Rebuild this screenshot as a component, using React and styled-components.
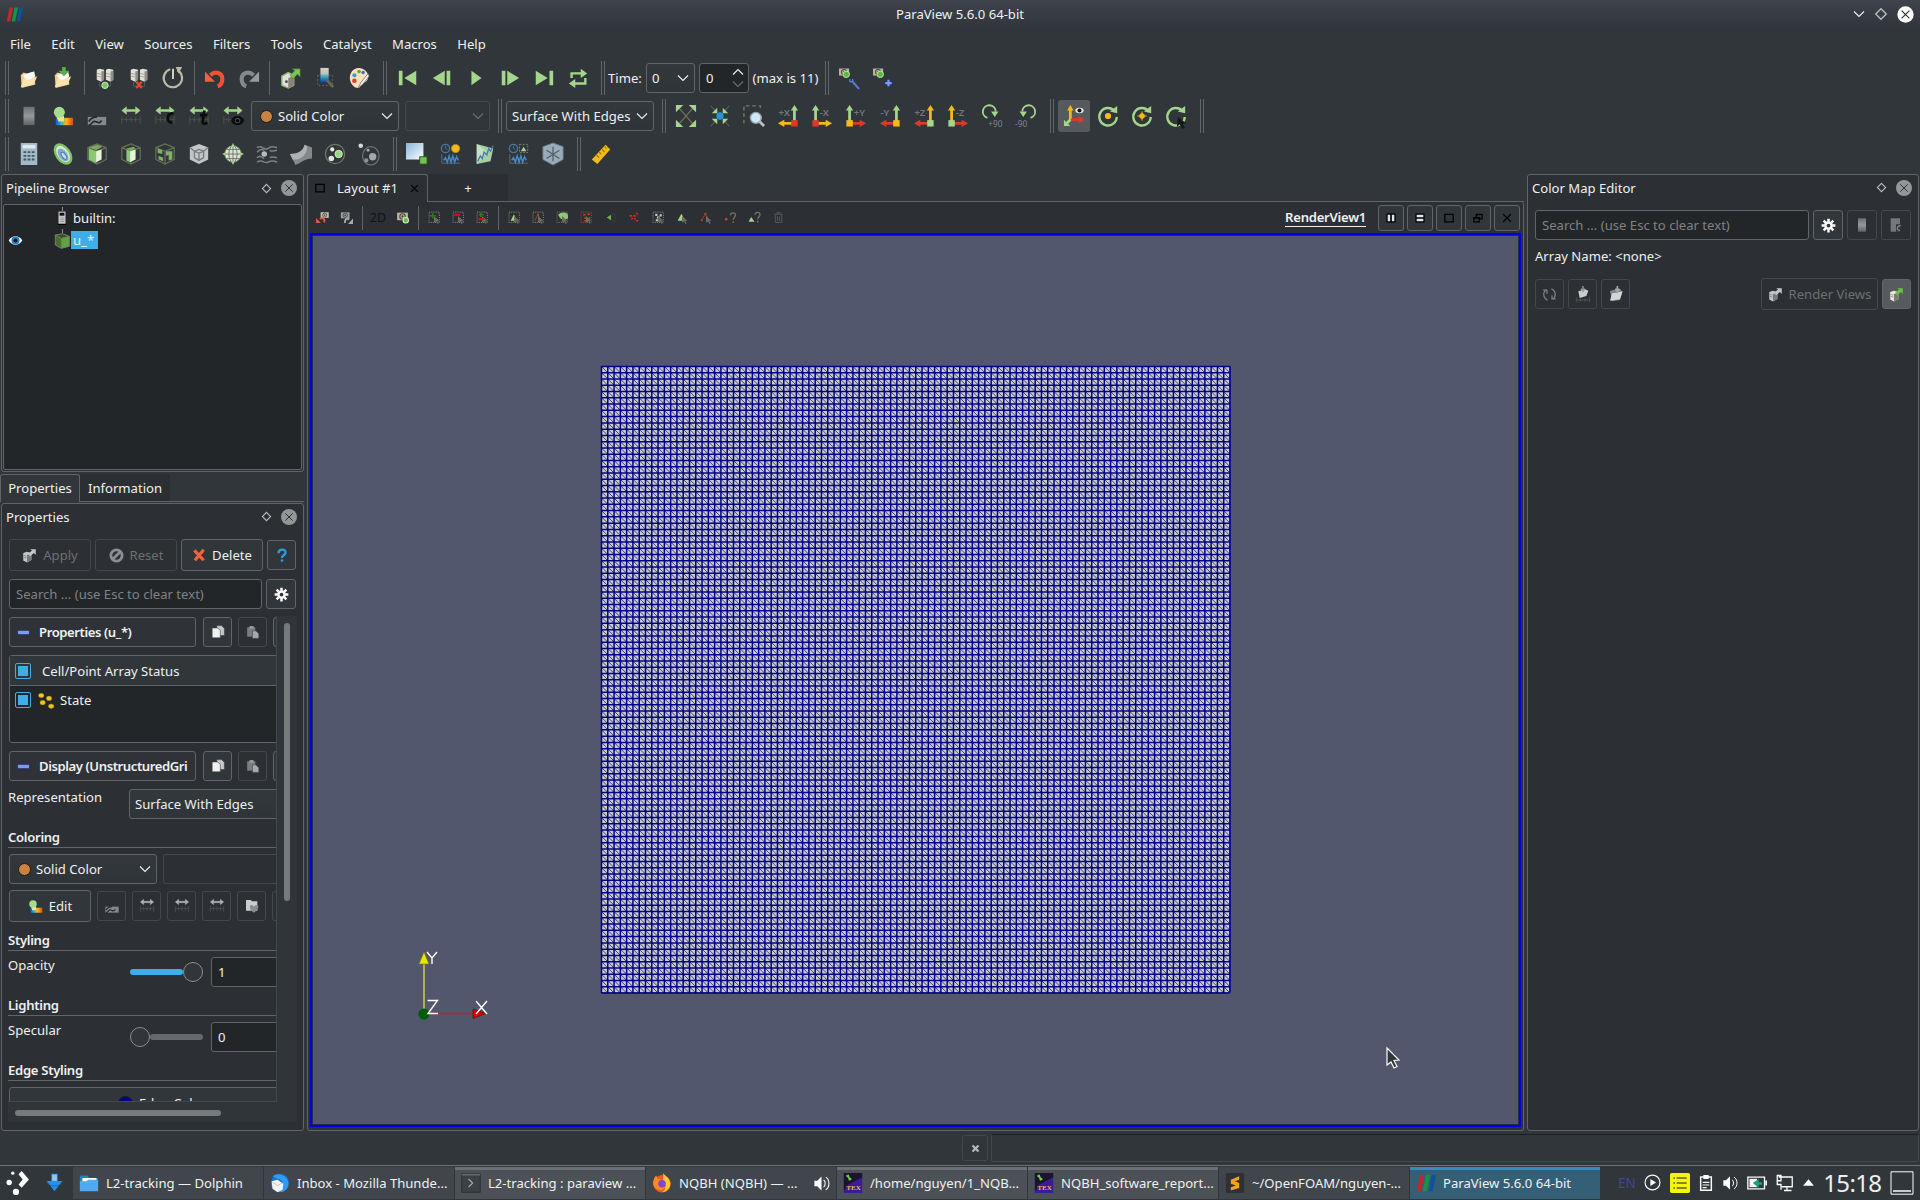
import React from "react";
import styled, { createGlobalStyle, css } from "styled-components";

const c = {
  win: "#31363b",
  panel: "#2c2f34",
  view: "#232629",
  line: "#616569",
  dim: "#44484c",
  text: "#eff0f1",
  muted: "#6d7073",
  blue: "#3daee9",
  green: "#a4d68c",
  red: "#da3b29",
  yellow: "#f5bb14",
};

const Global = createGlobalStyle`
  * { box-sizing: border-box; }
  html, body { margin: 0; padding: 0; background: ${c.win}; }
  body { font: 13.1px/18px "Noto Sans", "Liberation Sans", sans-serif; color: ${c.text}; overflow: hidden; }
  svg { display: block; flex: none; overflow: visible; }
`;

/* ---------- icon drawings, 24 x 24 ---------- */
const G = c.green;
const ServerPair = () => (
  <>
    <path d="M3 3l3-1 5 1v11l-3 2-5-2zM13 3l3-1 5 1v11l-3 2-5-2z" fill="#e3e0da" />
    <path d="M8 5v11l3-2V4zM18 5v11l3-2V4z" fill="#908e87" />
    <path d="M3 7l5 1M13 7l5 1M3 10l5 1M13 10l5 1" stroke="#a5a29b" />
    <path d="M6 16v5h12v-5" fill="none" stroke="#5a5d4d" />
  </>
);
const Folder = ({ a = "#fbe3ae", b = "#f0cf8d" }) => (
  <>
    <path d="M3 9l3-3 4 1 8-2v7l1 7-15 4z" fill={b} />
    <path d="M5 9l12-4 2 5-9 6z" fill="#fafafa" />
    <path d="M3 22l3-9 6 1 9-4-4 9z" fill={a} />
  </>
);
const Range = ({ k = G, g = "#4b5546" }) => (
  <>
    <path d="M2 6l5-4v3h10V2l5 4-5 4V7H7v3z" fill={k} stroke={k} strokeWidth=".6" />
    <path d="M2 12v9M7 13v6M12 13v6M17 13v6M22 12v9M2 16h20" stroke={g} fill="none" />
  </>
);
const Cube = ({ line = "#687158", face = "#8bc873", children }) => (
  <>
    <path d="M2 5l10-4 10 4v13l-10 5-10-5zM2 5l10 4 10-4M12 9v14" fill="none" stroke={line} strokeWidth="1.3" />
    {children || (
      <>
        <path d="M3 6l8 3v13l-8-4z" fill={face} />
        <path d="M3 5l9-3 6 2-7 4z" fill="#77a860" />
        <path d="M11 9l6-2v11l-6 3z" fill="#e7f3dd" />
      </>
    )}
  </>
);
const Axis = ({ up, side, dir, label, sq }) => {
  const x = dir > 0 ? 5 : 19;
  const s = dir;
  return (
    <>
      <path d={`M${x} 18V5`} stroke={up} strokeWidth="3" />
      <path d={`M${x - 4} 6l4-6 4 6z`} fill={up} />
      <path d={`M${x} 20h${s * 12}`} stroke={side} strokeWidth="3" />
      <path d={`M${x + s * 11} 16l${s * 7} 4 ${-s * 7} 4z`} fill={side} />
      <rect x={x - 3.5} y="16.5" width="7" height="7" fill={sq} />
      <text x={dir > 0 ? 9.5 : 1.5} y="11.5" fontSize="10.5" fontWeight="600" fill="#74777a">{label}</text>
    </>
  );
};
const Circ = ({ children }) => (
  <>
    <path d="M19.5 7A9.5 9.5 0 1 0 21.500 13" fill="none" stroke={G} strokeWidth="2.6" />
    <path d="M14 7l8-6v8z" fill={G} />
    {children}
  </>
);
const PVLogo = () => (
  <>
    <path d="M5 2h5L6 22H1z" fill="#c1272d" />
    <path d="M12 2h5l-4 20H8z" fill="#159447" />
    <path d="M19 2h5l-4 20h-5z" fill="#0d539c" />
  </>
);
const Server = ({ arrow = "#c4c7c9", body = "#c4c7c9" }) => (
  <>
    <path d="M2 8l6-2 7 2v11l-7 4-6-3z" fill={body} />
    <path d="M8 11v12l7-4V9z" fill="#77797a" />
    <path d="M3 12l4 1M3 15l4 1" stroke="#666" />
    <path d="M10 9l6-5-3-2h9v9l-3-3-6 5z" fill={arrow} />
  </>
);
const Camera = ({ f = "#b9b49f" }) => (
  <>
    <path d="M2 3h20v14H2z" fill={f} />
    <circle cx="12" cy="10" r="5" fill="none" stroke="#47483f" strokeWidth="2" />
    <circle cx="12" cy="10" r="2" fill="#47483f" />
  </>
);
const Dots = ({ k = "#777a7c" }) => (
  <rect x="2" y="2" width="19" height="19" fill="none" stroke={k} strokeWidth="2" strokeDasharray="2 2" />
);
const Ptr = () => <path d="M11 9l10 9-4 .5 3 4-3 1-2-4-4 2z" fill="#6d6c5d" />;
const Cog = () => (
  <g stroke="#fcfcfc" fill="none">
    <circle cx="12" cy="12" r="5" strokeWidth="4" />
    <path d="M12 1v5M12 18v5M1 12h5M18 12h5M4.200 4.200l3.500 3.500M16.300 16.300l3.500 3.500M4.200 19.800l3.500-3.500M16.300 7.700l3.500-3.500" strokeWidth="4" />
  </g>
);

const icons = {
  logo: <PVLogo />,
  open: <Folder />,
  save: (<><Folder /><path d="M11 0h4v4h4l-6 6-6-6h4z" fill="#56b043" /></>),
  connect: (<><ServerPair /><circle cx="12" cy="20" r="3.500" fill="#79c95a" stroke="#d5edc9" /></>),
  disconnect: (<><ServerPair /><path d="M9 16l6 7M15 16l-6 7" stroke="#e2492f" strokeWidth="2.600" /></>),
  clock: (<><path d="M17 3.500A10 10 0 1 1 9 2.500" fill="none" stroke="#bcbaa6" strokeWidth="2.400" /><path d="M12 2v11" stroke="#dedccb" strokeWidth="2" /><path d="M15 0h7l-4 7z" fill="#bcbaa6" /></>),
  undo: (<><path d="M7 9c5-5 13-3 13 4 0 4-2 7-5 8" fill="none" stroke="#f0532f" strokeWidth="4.500" /><path d="M1 5v11h11z" fill="#f2603a" /></>),
  redo: (<><path d="M17 9C12 4 4 6 4 13c0 4 2 7 5 8" fill="none" stroke="#85898c" strokeWidth="4.500" /><path d="M23 5v11H12z" fill="#989c9f" /></>),
  apply: (<><path d="M2 10l7-4 6 3v11l-6 3-7-3z" fill="#e2e0da" stroke="#8abb6b" strokeWidth="1.500" /><path d="M9 12v11l6-3V10z" fill="#85837c" /><circle cx="7" cy="16" r="1.500" fill="#444" /><path d="M11 9l5-5-3-2h9v9l-3-3-5 5z" fill="#7cc356" stroke="#3e6a2a" strokeWidth=".6" /></>),
  colorsel: (<><defs><linearGradient id="cs" x1="0" y1="0" x2="0" y2="1"><stop offset="0" stopColor="#d9cfc4" /><stop offset=".4" stopColor="#c5bfb7" /><stop offset=".5" stopColor="#57bcc2" /><stop offset="1" stopColor="#0b3ba8" /></linearGradient></defs><rect x="4" y="9" width="16" height="11" fill="none" stroke="#686a55" strokeDasharray="2 2" /><rect x="7" y="1" width="9" height="16" fill="url(#cs)" /><path d="M14 14l7 8" stroke="#686a55" strokeWidth="3" /></>),
  palette: (<><path d="M12 1C5 1 2 7 2 12s4 11 9 11c4 0 1-5 5-6 4 0 6-3 6-7 0-5-5-9-10-9z" fill="#fbe0bb" /><circle cx="7" cy="9" r="2.300" fill="#30a2cf" /><circle cx="12" cy="5" r="2" fill="#59ad40" /><circle cx="7" cy="15" r="2.500" fill="#e23d2f" /><circle cx="16.500" cy="6" r="2" fill="#3b78c4" /><path d="M22 7l-8 10-3 6 5-4 7-9z" fill="#f2f2ef" stroke="#555" strokeWidth=".7" /></>),
  first: <path d="M2 4h4v16H2zM21 4v16L8 12z" fill={G} />,
  prev: <path d="M15 4v16L2 12zM17 4h4v16h-4z" fill={G} />,
  play: <path d="M7 4l11 8-11 8z" fill={G} />,
  next: <path d="M3 4h4v16H3zM9 4l13 8-13 8z" fill={G} />,
  last: <path d="M3 4l13 8-13 8zM18 4h4v16h-4z" fill={G} />,
  loop: (<><path d="M5 12V7h13M20 12v6H7" fill="none" stroke={G} strokeWidth="2.600" /><path d="M15 2l7 5-7 5zM9 13l-7 5 7 5z" fill={G} /></>),
  wrench: (<><g transform="scale(.55)"><Camera /></g><circle cx="9" cy="8" r="3.500" fill="#5abd3b" stroke="#c9e8bb" /><path d="M15 15l8 9" stroke="#5878d8" strokeWidth="2.200" /><path d="M13 13v3h3v-3" fill="none" stroke="#5878d8" strokeWidth="1.500" /></>),
  addcam: (<><g transform="scale(.55)"><Camera /></g><circle cx="9" cy="8" r="3.500" fill="#5abd3b" stroke="#c9e8bb" /><path d="M18 13v9M13.500 17.500h9" stroke="#20307a" strokeWidth="4" /><path d="M18 14v7M14.500 17.500h7" stroke="#7f9bf0" strokeWidth="2.400" /></>),
  graybar: (<><defs><linearGradient id="gb" x1="0" y1="0" x2="0" y2="1"><stop offset="0" stopColor="#6d7073" /><stop offset=".5" stopColor="#96999c" /><stop offset="1" stopColor="#5f6265" /></linearGradient></defs><rect x="6" y="2" width="12" height="20" fill="url(#gb)" /></>),
  editmap: (<><defs><linearGradient id="rb"><stop offset="0" stopColor="#1a4fd0" /><stop offset=".3" stopColor="#2bb5d0" /><stop offset=".6" stopColor="#f5b81b" /><stop offset="1" stopColor="#e04a17" /></linearGradient></defs><path d="M6 12h7v5H6z" fill="#efe38a" /><rect x="4" y="14" width="19" height="8" fill="url(#rb)" /><path d="M5 13h8v5H7z" fill="#efe38a" /><circle cx="8" cy="8" r="6" fill="#a6dd8c" /></>),
  sepmap: (<><rect x="2" y="13" width="20" height="9" fill="#85888a" /><path d="M3 22c4 0 3-5 7-4s4 3 7-1M3 18c2-3 4-5 9-5" stroke="#24272a" strokeWidth="1.800" fill="none" /></>),
  range: <Range />,
  rangeGray: <Range k="#b0b3b5" g="#55585b" />,
  rangec: (<><Range /><path d="M21 10c-6-4-9 10-1 9" fill="none" stroke="#0b0c0d" strokeWidth="3.200" /></>),
  ranget: (<><Range /><path d="M18 6l-2 12c0 3 3 3 5 1M13 11h8" fill="none" stroke="#0b0c0d" strokeWidth="3" /></>),
  rangeeye: (<><Range /><ellipse cx="17" cy="17" rx="7" ry="5" fill="#0b0c0d" /><circle cx="17" cy="17" r="3" fill="#454a4e" /><circle cx="17" cy="17" r="1.800" fill="#000" /></>),
  calc: (<><rect x="3" y="0" width="18" height="24" fill="#a3b9c5" /><rect x="5" y="2" width="14" height="4" fill="#dfeaf0" /><path d="M6 10h3M10.500 10h3M15 10h3M6 14h3M10.500 14h3M15 14h3M6 18h3M10.500 18h3M15 18h3" stroke="#3f5a6b" strokeWidth="2" /></>),
  contour: (<><ellipse cx="12" cy="12" rx="8.500" ry="13" transform="rotate(-35 12 12)" fill="#7fc068" /><ellipse cx="12" cy="12" rx="6" ry="10" transform="rotate(-35 12 12)" fill="#d8ead5" /><ellipse cx="12" cy="13" rx="4.500" ry="8" transform="rotate(-35 12 13)" fill="#7fa7d3" /><ellipse cx="13" cy="14" rx="2" ry="4.500" transform="rotate(-35 13 14)" fill="#c9dcee" stroke="#4a78a0" /></>),
  clip: <Cube />,
  slice: (<Cube><path d="M7 6l8-2 2 2-6 3z" fill="#77a860" /><path d="M7 7l4 2v12l-4-2z" fill="#8bc873" /><path d="M11 9l6-2v11l-6 3z" fill="#e7f3dd" /></Cube>),
  threshold: (<Cube><path d="M4 6l5 2v4l-5-1zM13 9h7v9l-4 1v-6l-3 1zM5 14l5 2v4l-5-2z" fill="#7eb166" /></Cube>),
  subset: (<><path d="M2 5l10-4 10 4v13l-10 5-10-5z" fill="#c3c6c8" /><path d="M7 9l5-2 5 2v7l-5 3-5-3zM7 9l5 2 5-2M12 11v8M2 5l5 4M22 5l-5 4" fill="none" stroke="#77797b" strokeWidth="1.400" /></>),
  glyph: (<><circle cx="12" cy="12" r="9" fill="#dfe3dc" stroke="#768b67" /><path d="M3 12h18M12 3v18M5 7h14M5 17h14" stroke="#65745c" fill="none" /><ellipse cx="12" cy="12" rx="4.500" ry="9" fill="none" stroke="#65745c" /><path d="M12 0l2 4h-4zM12 24l2-4h-4zM0 12l4-2v4zM24 12l-4-2v4z" fill={G} /></>),
  stream: (<><path d="M1 5c6-4 7 4 12 1 4-3 6-2 10-1M1 10c4-4 6-3 8-2M15 8c3 2 5 0 8 0M1 16c4-3 6 0 8 1M15 16c3-2 5 0 8 0M1 21c6-4 8 2 12 0 4-2 6-2 10 0" stroke="#7d8184" fill="none" strokeWidth="1.600" /><circle cx="9" cy="12" r="3" fill="#b7bbbd" /></>),
  warp: (<><path d="M0 12c9 0 14-3 16-10l8 3v12c-8 0-12 5-18 7z" fill="#85888b" /><path d="M0 12c9 0 14-3 16-10l3 2c-1 10-8 15-16 14z" fill="#aeb1b3" /></>),
  group: (<><circle cx="12" cy="12" r="10.500" fill="none" stroke="#707863" strokeWidth="1.300" /><circle cx="9" cy="7" r="2.300" fill="#e9ede6" /><circle cx="16" cy="12" r="4" fill="#9bd681" stroke="#d5edc9" /><circle cx="8" cy="17" r="3" fill="#dfe5e0" /></>),
  extract: (<><ellipse cx="14" cy="14" rx="9" ry="10" fill="none" stroke="#707477" strokeWidth="1.300" /><circle cx="3" cy="3" r="2.500" fill="#d5d8da" /><circle cx="16" cy="15" r="4" fill="#a4a8aa" /><circle cx="9" cy="19" r="2.300" fill="#8d9193" /><circle cx="11" cy="8" r="1.600" fill="#aaa" /></>),
  pick: (<><defs><linearGradient id="pk" x1="0" y1="0" x2="1" y2="1"><stop offset="0" stopColor="#85b6dd" /><stop offset="1" stopColor="#fff" /></linearGradient></defs><rect x="0" y="0" width="19" height="18" fill="url(#pk)" /><rect x="15" y="15" width="8" height="8" fill="#77c055" stroke="#2e4f21" /></>),
  tplot: (<><circle cx="6" cy="6" r="4.500" fill="none" stroke="#4a7498" strokeWidth="1.500" /><path d="M6 3v3l2 1" stroke="#4a7498" fill="none" /><circle cx="17" cy="6" r="4.500" fill={c.yellow} stroke="#a98829" /><path d="M2 12v10h20" stroke="#606c76" fill="none" /><path d="M4 19l2-3 2 5 2-7 2 7 2-7 2 7 2-6 2 4" stroke="#4689c2" fill="none" strokeWidth="1.600" /></>),
  lplot: (<><path d="M3 1l18 5-3 14-15 3z" fill="#a8cfa2" /><path d="M3 1l11 9-11 13z" fill="#c6dfc4" /><path d="M4 20l3-6 2 3 2-7 3 3 2-7 2 3 3-6" stroke="#407fae" fill="none" strokeWidth="1.500" /></>),
  splot: (<><circle cx="6" cy="6" r="4.500" fill="none" stroke="#4a7498" strokeWidth="1.500" /><path d="M6 3v3l2 1" stroke="#4a7498" fill="none" /><rect x="12.500" y="1.500" width="9" height="9" fill="none" stroke="#878a72" strokeDasharray="2 1.500" /><path d="M14 9l3-5 3 5z" fill={G} /><path d="M2 12v10h20" stroke="#606c76" fill="none" /><path d="M4 19l2-3 2 5 2-7 2 7 2-7 2 7 2-6 2 4" stroke="#4689c2" fill="none" strokeWidth="1.600" /></>),
  hex: (<><path d="M1 4l11-4 11 4v14l-11 6-11-6z" fill="#9aabb9" stroke="#6e7d89" /><path d="M12 4v16M5 8l14 9M19 8L5 17" stroke="#56616b" strokeWidth="1.400" /></>),
  ruler: (<><path d="M2 18L17 2l5 5L8 23z" fill={c.yellow} /><path d="M7 13l3 3M10 10l2 2M13 7l3 3M16 4l2 2" stroke="#94701a" strokeWidth="1.300" /></>),
  reset: (<><path d="M5 4l14 16M19 4L5 20" stroke="#6f7058" strokeWidth="1.500" /><path d="M1 0h8l-8 8zM23 0v8l-8-8zM1 24v-8l8 8zM23 24h-8l8-8z" fill={G} /></>),
  zoomdata: (<><path d="M2 1l7 8M22 1l-7 8M2 23l7-8M22 23l-7-8" stroke="#6f7058" /><path d="M9 3v6H3zM15 3v6h6zM9 21v-6H3zM15 21v-6h6z" fill={G} /><circle cx="12" cy="12" r="4" fill="#2a93d5" /></>),
  zoombox: (<><path d="M1 20V1h18v5" fill="none" stroke="#74776a" strokeDasharray="4 3" strokeWidth="1.500" /><circle cx="14" cy="14" r="6" fill="#cfe8f3" stroke="#8b9fa9" strokeWidth="1.500" /><path d="M18 18l5 5" stroke="#bcc0c2" strokeWidth="3" /></>),
  px: <Axis up={G} side={c.yellow} sq={c.red} dir={-1} label="+X" />,
  mx: <Axis up={G} side={c.yellow} sq={c.red} dir={1} label="-X" />,
  py: <Axis up={G} side={c.red} sq={c.yellow} dir={1} label="+Y" />,
  my: <Axis up={G} side={c.red} sq={c.yellow} dir={-1} label="-Y" />,
  pz: <Axis up={c.yellow} side={c.red} sq={G} dir={-1} label="+Z" />,
  mz: <Axis up={c.yellow} side={c.red} sq={G} dir={1} label="-Z" />,
  rotp: (<><path d="M7 14A7 7 0 1 1 16 7" fill="none" stroke={G} strokeWidth="2" /><path d="M11 7h8l-4 6z" fill={G} /><text x="8" y="24.500" fontSize="9" fill="#808386">+90</text></>),
  rotm: (<><path d="M17 14A7 7 0 1 0 8 7" fill="none" stroke={G} strokeWidth="2" /><path d="M5 7h8l-4 6z" fill={G} /><text x="0" y="24.500" fontSize="9" fill="#808386">-90</text></>),
  orient: (<><path d="M8 16V5" stroke={c.yellow} strokeWidth="3" /><path d="M4.500 6L8 0l3.500 6z" fill={c.yellow} /><path d="M9 16h9" stroke={c.red} strokeWidth="3" /><path d="M17 12l7 4-7 4z" fill={c.red} /><path d="M8 16l-5 5" stroke={G} strokeWidth="3" /><path d="M1 16v7h7z" fill={G} /><ellipse cx="18" cy="6" rx="4.500" ry="3" fill="#e9e9e9" /><circle cx="18" cy="6" r="2.200" fill="#111" /></>),
  cshow: <Circ><circle cx="12" cy="12" r="3.400" fill={c.yellow} /></Circ>,
  creset: <Circ><path d="M12 7v10M7 12h10" stroke={c.yellow} strokeWidth="1.200" /><circle cx="12" cy="12" r="3" fill={c.yellow} /></Circ>,
  cpick: <Circ><path d="M14 13l9 7-4 1 3 4-3 1-3-5-3 3z" fill="#15171a" /></Circ>,
  camundo: (<><g transform="translate(7 0) scale(.75)"><Camera f="#c8bfae" /></g><path d="M7 15c5-4 10-1 8 6" fill="none" stroke="#e2593c" strokeWidth="3.500" /><path d="M0 13v9h9z" fill="#e2593c" /></>),
  camredo: (<><g transform="scale(.8)"><Camera f="#9b9ea1" /></g><path d="M17 16c-4-4-8-1-8 6" fill="none" stroke="#a8abae" strokeWidth="3.500" /><path d="M24 14v10h-9z" fill="#a8abae" /></>),
  campic: (<><Camera /><circle cx="18" cy="17" r="5" fill="#67bf48" stroke="#d5edc9" strokeWidth="2" /></>),
  seladd: (<><Dots /><Ptr /><path d="M9 4v10M4 9h10" stroke="#2c7a1a" strokeWidth="3" /></>),
  selsub: (<><Dots /><Ptr /><path d="M4 7h11" stroke="#e01010" strokeWidth="3.500" /></>),
  seltog: (<><Dots /><Ptr /><path d="M9 3v8M5 7h9" stroke="#2c7a1a" strokeWidth="3" /><path d="M4 15h11" stroke="#e01010" strokeWidth="3.500" /></>),
  scell: (<><Dots k="#77795f" /><path d="M5 18l6-12 5 12z" fill={G} /><Ptr /></>),
  spoint: (<><Dots k="#77795f" /><path d="M5 18l6-12 5 12" fill="none" stroke="#6b4a3c" strokeWidth="2" /><circle cx="11" cy="7" r="2" fill="#d33a1d" /><Ptr /></>),
  sfrc: (<><Dots k="#666a5d" /><path d="M4 7c5-6 18-5 18 1v6l-8 2-6-2z" fill="#8fc976" /><Ptr /></>),
  sfrp: (<><Dots k="#91402f" /><path d="M6 7h4M14 6h4M8 13h4M16 13h3M8 18h3" stroke="#dd3f24" strokeWidth="2.500" /><Ptr /></>),
  spolyc: (<><path d="M14 6l6-2v16l-6-4" fill="none" stroke="#30422c" strokeWidth="2" /><path d="M5 12l8-5v10z" fill="#6fae57" /></>),
  spolyp: <path d="M3 9h4M6 14h3M10 9h4M15 5h3M11 14h3M15 18h4" stroke="#dd3015" strokeWidth="3.200" />,
  sblock: (<><Dots /><path d="M6 7h4M14 8h4M9 12h5M7 17h4" stroke="#c6c9c6" strokeWidth="4" /><Ptr /></>),
  icell: (<><path d="M3 18l7-13 7 13z" fill={G} /><Ptr /></>),
  ipoint: (<><path d="M3 17l7-12 6 12" fill="none" stroke="#6b4a3c" strokeWidth="2" /><circle cx="10" cy="5" r="2" fill="#d33a1d" /><circle cx="3" cy="17" r="2" fill="#d33a1d" /><Ptr /></>),
  hpoint: (<><circle cx="4" cy="15" r="2.500" fill="#c04a2c" /><path d="M12 8c0-6 10-6 9 0 0 4-4 4-4 8M17 19v3" fill="none" stroke="#74735f" strokeWidth="2.500" /></>),
  hcell: (<><path d="M1 20l5-9 6 9z" fill={G} /><path d="M13 7c0-6 10-6 9 0 0 4-4 4-4 8M18 18v3" fill="none" stroke="#74735f" strokeWidth="2.500" /></>),
  trash: <path d="M4 6h16M9 6V3h6v3M6 7v14h12V7M10 10v8M14 10v8" fill="none" stroke="#55595c" strokeWidth="1.800" />,
  splith: (<><path d="M1 1h22v22H1z" fill="#000" /><path d="M4 4h6v16H4zM14 4h6v16h-6z" fill="#dfe5f5" /></>),
  splitv: (<><path d="M1 1h22v22H1z" fill="#000" /><path d="M4 4h16v6H4zM4 14h16v6H4z" fill="#dfe5f5" /></>),
  max: <path d="M2 3h20v18H2z" fill="none" stroke="#000" strokeWidth="3" />,
  restore: <path d="M2 11h13v10H2zM8 10V3h14v11h-6M2 12h13M8 4h14" fill="none" stroke="#000" strokeWidth="3" />,
  cross: <path d="M3 3l18 18M21 3L3 21" stroke="#000" strokeWidth="3" />,
  applyg: <Server />,
  applyc: <Server arrow="#6bc43d" body="#ebe8de" />,
  resetg: (<><circle cx="12" cy="12" r="9" fill="none" stroke="#8c8f91" strokeWidth="4.500" /><path d="M6 18L18 6" stroke="#8c8f91" strokeWidth="4.500" /></>),
  delete: <path d="M4 4l16 17M20 3L5 21" stroke="#f4623c" strokeWidth="5.500" />,
  help: (<><path d="M6 9c0-8 13-8 12-1 0 4-6 4-6 9" fill="none" stroke="#299be0" strokeWidth="4" /><circle cx="12" cy="21.500" r="2.300" fill="#299be0" /></>),
  cog: <Cog />,
  minus: <path d="M1 8h22v8H1z" fill="#7d9cec" stroke="#222b63" strokeWidth="1.500" />,
  copy: (<><path d="M10 1h8l5 5v12H10z" fill="#c6c7c8" stroke="#3b3d3f" /><path d="M2 5h9l5 4v13H2z" fill="#f0f0f0" stroke="#3b3d3f" /></>),
  paste: (<><path d="M2 4h14v16H2z" fill="#7b7e81" /><path d="M6 2h7v4H6z" fill="#a0a3a5" /><path d="M11 10h6l5 5v8H11z" fill="#a7aaac" stroke="#3b3d3f" /></>),
  heart: (<><path d="M3 3h7l2 2h8v14H3z" fill="#c9cccd" /><path d="M15 22c-9-6-7-13-2-11l2 2 2-2c6-2 7 5-2 11z" fill="#8a8d8f" /></>),
  state: [[6, 5], [17, 9], [8, 15], [20, 20]].map(([x, y]) => <ellipse key={x} cx={x} cy={y} rx="3.800" ry="3.200" fill="#f1c523" stroke="#8d6f12" strokeWidth=".6" />),
  eye: (<><path d="M1 12c6-9 16-9 22 0-6 9-16 9-22 0z" fill="#fff" /><circle cx="12" cy="12" r="6.500" fill="#1a89d0" /><circle cx="12" cy="12" r="3.300" fill="#04111c" /></>),
  box: (<><path d="M2 3l9 5v15l-9-5z" fill="#44702b" /><path d="M2 3l11-2 10 4-12 3z" fill="#38521f" /><path d="M11 8l12-3v15l-12 3z" fill="#62a33d" /><path d="M2 3l9 5 12-3M11 8v15M2 3v15l9 5 12-3V5L13 1z" fill="none" stroke="#7f7b68" strokeWidth="1.500" /></>),
  host: (<><rect x="6" y="1" width="12" height="22" fill="#c8c8c8" /><rect x="8" y="3" width="8" height="5" fill="#111" /><path d="M9 12h7M9 15h7M9 18h7" stroke="#777" /><path d="M5 23h14" stroke="#000" strokeWidth="2" /></>),
  diamond: <path d="M12 3l9 9-9 9-9-9z" fill="none" stroke="#b9bbbd" strokeWidth="2.400" />,
  closeRound: (<><circle cx="12" cy="12" r="12" fill="#939597" /><path d="M6.500 6.500l11 11M17.500 6.500l-11 11" stroke="#2d3034" strokeWidth="1.500" /></>),
  closeTitle: (<><circle cx="12" cy="12" r="11.500" fill="#fcfcfc" /><path d="M6.500 6.500l11 11M17.500 6.500l-11 11" stroke="#2d3034" strokeWidth="1.600" /></>),
  chevron: <path d="M2 7l10 10L22 7" fill="none" stroke="#eff0f1" strokeWidth="2.200" />,
  refresh: (<><path d="M9 21A9.500 9.500 0 0 1 6 5M15 3a9.500 9.500 0 0 1 3 16" fill="none" stroke="#7d8082" strokeWidth="2" /><path d="M2 5h6v6M22 19h-6v-6" fill="none" stroke="#7d8082" strokeWidth="2" /></>),
  loadr: (<><path d="M5 8l10-3 5 2-3 8-10 3z" fill="#c9cccd" /><path d="M12 0v8M9 4l3 4 3-4" stroke="#9b9ea0" strokeWidth="2" fill="none" /><path d="M2 17v7M8 19v4M15 19v4M22 17v7M2 21h20" stroke="#5e6164" fill="none" /></>),
  loadf: (<><path d="M3 8l4-2 12-1 2 4-3 12-12 2z" fill="#85888a" /><path d="M3 22l3-11 7-1 9-2-4 12z" fill="#d3d5d6" /><path d="M14 0v7M11 4l3 4 3-4" stroke="#a5a8aa" strokeWidth="2.500" fill="none" /></>),
  savep: (<><path d="M4 2h14v20H4z" fill="#75787b" /><path d="M12 11h8v11h-8z" fill="#303438" /><path d="M19 13c-6 0-7 7-1 7" stroke="#8a8d8f" strokeWidth="2" fill="none" /></>),
  kde: (<g fill="#fcfcfc"><circle cx="7.500" cy="3" r="1.600" /><circle cx="4" cy="12" r="2.600" /><circle cx="10.500" cy="21" r="3" /><path d="M13 4l3-3 7 8-7 8-3-3 4-5z" /></g>),
  down: (<><path d="M8 1h8v9h6L12 23 2 10h6z" fill="#2590ee" /><path d="M9 2h6v8H9z" fill="#8cc8f8" /><path d="M2 12c5 6 15 6 20 0" stroke="#1c5ca4" fill="none" /></>),
  folder: (<><path d="M1 3h9l3 3h10v5H1z" fill="#1c86b8" /><path d="M4 6h17v8H4z" fill="#fff" /><path d="M1 10h8l2-2h12v14H1z" fill="#51a9f0" /></>),
  bird: (<><circle cx="12" cy="12" r="11" fill="#1e6fd3" /><path d="M3 4c8-7 23 1 18 13-3 6-9 7-12 5 9-3 9-14 0-15z" fill="#2d9cf2" /><path d="M2 10l7-2 7 5-1 7-6 3-6-4z" fill="#f4f4f4" /><path d="M3 11l6 4 6-3" stroke="#b8bec6" fill="none" /></>),
  term: (<><rect x="1" y="1" width="22" height="22" fill="#3b4145" stroke="#24282b" /><path d="M1 2h22" stroke="#63696d" strokeWidth="2" /><path d="M9 7l5 5-5 5" stroke="#a9aeb1" fill="none" strokeWidth="1.400" /></>),
  fox: (<><circle cx="12" cy="13" r="10.500" fill="#f3532c" /><path d="M13 0c3 4 9 6 9 13 0 6-5 10-10 10 7-4 4-12 0-13 2-3 2-6 1-10z" fill="#ffc92b" /><path d="M2 8c1-3 2-4 3-5l2 4 4 1 1 4-4 1c0 4 5 5 8 3-1 5-7 6-11 3S1 12 2 8z" fill="#ff8a1e" /><circle cx="12" cy="13" r="4.500" fill="#8145d0" /></>),
  speaker: (<><path d="M2 8h4l6-6v20l-6-6H2z" fill="#fcfcfc" /><path d="M15 7c3 2 3 8 0 10M18 3c6 4 6 14 0 18" fill="none" stroke="#fcfcfc" strokeWidth="1.500" /></>),
  tex: (<><rect x="1" y="0" width="22" height="24" fill="#3a1d92" /><path d="M1 0h22v5L6 14 1 22z" fill="#1b1330" /><path d="M4 3l6 5M6 2l2 7" stroke="#6ed63c" strokeWidth="1.800" /><text x="4" y="20" fontSize="8.500" fontFamily="Liberation Serif" fontWeight="700" fill="#f0b35a">TEX</text></>),
  sublime: (<><rect x="1" y="0" width="22" height="24" rx="2" fill="#2c3134" /><path d="M7 8l10-4v4l-5 2 5 2v6l-10 3v-4l6-2-6-2z" fill="#f8a11d" /></>),
  trayplay: (<><circle cx="12" cy="12" r="10.500" fill="none" stroke="#fcfcfc" strokeWidth="1.600" /><path d="M9 7l8 5-8 5z" fill="#fcfcfc" /></>),
  notes: (<><rect width="24" height="24" rx="2" fill="#f4f40c" /><path d="M4 6h2M8 6h12M4 12h2M8 12h12M4 18h2M8 18h12" stroke="#5d5d27" strokeWidth="2" /></>),
  clipb: (<><path d="M4 3h16v20H4z" fill="none" stroke="#fcfcfc" strokeWidth="2.200" /><path d="M8 0h8v6H8z" fill="#fcfcfc" /><path d="M7 11h10M7 15h10M7 19h6" stroke="#fcfcfc" strokeWidth="1.700" /></>),
  battery: (<><path d="M1 5h20v14H1z" fill="none" stroke="#fcfcfc" strokeWidth="1.600" /><path d="M22 9h2v6h-2z" fill="#fcfcfc" /><path d="M3 7h9v10H3z" fill="#fcfcfc" /><path d="M7 12l7-5v4h4v3h-4v4z" fill="#1ea37d" /></>),
  net: (<><path d="M5 4h18v13H9M3 2h5v7H3zM3 9v5h5v7M12 22h10M16 17v5" fill="none" stroke="#fcfcfc" strokeWidth="1.700" /></>),
  tri: <path d="M2 18L12 6l10 12z" fill="#fcfcfc" />,
  desk: (<><path d="M1 .800h22v22.400H1z" fill="none" stroke="#fcfcfc" strokeWidth="1" /><path d="M3 20h18" stroke="#fcfcfc" strokeWidth="1.500" /></>),
  clearx: <path d="M4 4l16 16M20 4L4 20" stroke="#b6b8ba" strokeWidth="6" />,
};
const Icon = ({ n, s = 22 }) => (
  <svg width={s} height={s} viewBox="0 0 24 24">{icons[n]}</svg>
);

/* ---------- shared parts ---------- */
const Window = styled.div`width: 1920px; height: 1200px; display: flex; flex-direction: column; background: ${c.win};`;
const TitleBar = styled.header`
  height: 28px; flex: none; display: grid; grid-template-columns: 1fr auto 1fr; align-items: center; padding: 0 6px;
  background: linear-gradient(#3e434d, #31363b);
`;
const TitleEnd = styled.div`display: flex; justify-content: flex-end; align-items: center; gap: 9px;`;
const MenuBar = styled.nav`height: 33px; flex: none; display: flex; align-items: center; gap: 20.4px; padding: 0 10px 2px;`;
const ToolRow = styled.div`height: 34px; margin-bottom: ${(p) => p.$mb || 4}px; padding-left: 5px; flex: none; display: flex; align-items: center; white-space: nowrap;`;
const Cell = styled.span`
  width: ${(p) => p.$w || 34}px; height: 34px; flex: none; display: flex; align-items: center; justify-content: center;
`;
const Pressed = styled.span`width: 32px; height: 32px; border-radius: 3px; background: #56595d; display: flex; align-items: center; justify-content: center;`;
const Grip = styled.i`width: 4px; height: 34px; flex: none; border: solid ${c.line}; border-width: 0 1px; margin: 0 ${(p) => p.$r ?? 3}px 0 ${(p) => p.$l ?? 0}px;`;
const Rule = styled.i`width: 1px; height: ${(p) => p.$h || 34}px; flex: none; background: ${c.line}; margin: 0 ${(p) => p.$r ?? 4}px 0 ${(p) => p.$l ?? 4}px;`;
const frame = css`
  border: 1px solid ${(p) => (p.$off ? c.dim : c.line)}; border-radius: 3px; flex: none;
  color: ${(p) => (p.$off ? c.muted : c.text)};
`;
const Combo = styled.div`
  ${frame} width: ${(p) => p.$w}px; height: 30px; margin-right: ${(p) => p.$mr || 0}px; padding: 0 5px 0 5px;
  display: flex; align-items: center; gap: 5px; white-space: nowrap;
  background: ${(p) => (p.$off ? "transparent" : "linear-gradient(#33383d, #2f3439)")};
  svg { margin-left: auto; opacity: ${(p) => (p.$off ? 0.3 : 1)}; }
`;
const Swatch = styled.i`width: ${(p) => p.$s || 13}px; height: ${(p) => p.$s || 13}px; flex: none; border-radius: 50%; background: ${(p) => p.$c}; border: 1px solid #1b1b1b; margin-left: 3px;`;
const Button = styled.div`
  ${frame} width: ${(p) => p.$w}px; height: ${(p) => p.$h || 30}px; display: flex; align-items: center; justify-content: center; gap: 6px;
  background: ${(p) => (p.$on ? "#575a5e" : p.$off ? "transparent" : "#31363b")};
`;
const Field = styled.div`
  ${frame} width: ${(p) => p.$w}px; height: 30px; padding: 0 4px 0 6px; display: flex; align-items: center; background: ${c.view};
  color: ${(p) => (p.$hint ? "#7f8284" : c.text)}; white-space: nowrap;
`;
const Steps = styled.span`margin-left: auto; display: flex; flex-direction: column; svg:first-child { transform: rotate(180deg); } svg:last-child { opacity: 0.35; }`;
const TimeLabel = styled.span`margin-right: 4px; flex: none; width: 34px;`;
const Row = styled.div`display: flex; align-items: center; gap: ${(p) => p.$g || 0}px; margin-top: ${(p) => p.$mt || 0}px; flex: none;`;

const Main = styled.main`height: 957px; flex: none; display: flex; padding: 0 1px 0 1px;`;
const Dock = styled.section`border: 1px solid ${c.line}; border-radius: 3px; background: ${c.panel}; display: flex; flex-direction: column; height: ${(p) => p.$h}px; flex: none; overflow: hidden;`;
const DockHead = styled.div`height: ${(p) => p.$h || 29}px; flex: none; display: flex; align-items: center; padding: 0 6px 3px 4px; svg:nth-of-type(1) { margin: 0 9px 0 auto; }`;
const Head = ({ children, h }) => (
  <DockHead $h={h}><span>{children}</span><Icon n="diamond" s={11} /><Icon n="closeRound" s={16} /></DockHead>
);
const Left = styled.div`width: 303px; flex: none; display: flex; flex-direction: column; margin-right: 3px;`;
const Tree = styled.div`margin: 0 1px 1px; flex: 1; border: 1px solid ${c.line}; border-radius: 2px; background: ${c.view}; padding-top: 2px;`;
const TreeRow = styled.div`height: 22px; display: flex; align-items: center; padding-left: 4px;`;
const TreeEye = styled.span`width: 45px; display: flex;`;
const TreeIcon = styled.span`width: 18px; height: 22px; display: flex; flex-direction: column; align-items: center;
  &::before { content: ""; width: 1px; height: ${(p) => p.$stem}px; background: #8b8e90; }`;
const TreeName = styled.span`padding: 0 4px 0 2px; height: 18px; background: ${(p) => (p.$sel ? c.blue : "transparent")};`;
const TabStrip = styled.div`height: 28px; flex: none; display: flex;
  &::after { content: ""; flex: 1; border-bottom: 1px solid ${c.line}; }`;
const DockTabs = styled(TabStrip)`margin: 2px 0 1px -1px;`;
const Tab = styled.div`
  width: ${(p) => p.$w}px; display: flex; align-items: center; justify-content: ${(p) => (p.$spread ? "space-between" : "center")};
  padding: ${(p) => (p.$spread ? "0 8px 1px 7px" : p.$on ? "0 0 2px" : "0")};
  background: ${(p) => (p.$on ? p.$bg || c.win : "#2b2f33")}; border: solid ${c.line};
  border-width: ${(p) => (p.$on ? "1px 1px 0 1px" : "0 0 1px 0")}; border-radius: ${(p) => (p.$on ? "3px 3px 0 0" : 0)};
`;
const Props = styled.div`padding: 7px 0 0 7px; display: flex; flex-direction: column; flex: 1; min-height: 0;`;
const Scroller = styled.div`display: grid; grid-template: 486px 20px / 269px 20px; margin-top: 7px; margin-left: -1px;`;
const Page = styled.div`overflow: hidden; padding-left: 1px; border-right: 1px solid ${c.dim}; border-bottom: 1px solid ${c.dim};`;
const Bar = styled.div`background: #303539; padding: ${(p) => (p.$h ? "8px 7px" : "7px 7px")};`;
const Thumb = styled.div`width: ${(p) => p.$w}px; height: ${(p) => p.$h}px; border-radius: 3px; background: #777a7d;`;
const Wide = styled.div`width: 330px;`;
const Section = styled.div`${frame} width: 187px; height: 30px; background: #2f3338; display: flex; align-items: center; gap: 9px; padding-left: 7px; font-weight: 600; letter-spacing: -0.42px; white-space: nowrap; margin-right: 1px;`;
const ArrayBox = styled.div`border: 1px solid ${c.line}; border-radius: 3px; height: 88px; margin-top: 8px; background: ${c.view};`;
const ArrayRow = styled.div`height: ${(p) => (p.$head ? 30 : 28)}px; padding-left: 5px; display: flex; align-items: center; gap: ${(p) => (p.$head ? 11 : 6)}px;
  ${(p) => p.$head && `background: ${c.win}; border-bottom: 1px solid ${c.line};`}`;
const Check = styled.i`width: 16px; height: 16px; border: 1px solid ${c.blue}; border-radius: 2px; padding: 2px; &::after { content: ""; display: block; width: 10px; height: 10px; background: ${c.blue}; }`;
const Heading = styled.div`font-weight: 600; height: 20px; line-height: 18px; margin: ${(p) => p.$mt}px 0 6px -1px; border-bottom: 1px solid ${c.line}; letter-spacing: -0.3px;`;
const Prop = styled.div`display: flex; margin-left: -1px; height: 30px; margin-top: ${(p) => p.$mt || 0}px;`;
const PropName = styled.span`width: ${(p) => p.$w || 122}px; line-height: 17px;`;
const Slider = styled.div`width: 73px; height: 30px; margin-right: 8px; display: flex; align-items: center; flex-direction: ${(p) => (p.$full ? "row" : "row-reverse")};
  &::before { content: ""; flex: 1; height: 6px; border-radius: 3px; background: ${(p) => (p.$full ? c.blue : "#66696d")}; }
  &::after { content: ""; width: 18px; height: 18px; border-radius: 50%; border: 1px solid #8a8d90; background: #31363b; }`;
const EdgeButton = styled.div`${frame} width: 330px; height: 32px; background: ${c.win}; display: flex; align-items: center; gap: 6px; padding-left: 105px;`;

const Center = styled.div`width: 1217px; flex: none; display: flex; flex-direction: column;`;
const ViewFrame = styled.div`flex: 1; border: solid ${c.line}; border-width: 0 1px 1px; border-radius: 0 3px 3px 3px; background: ${c.panel}; padding: 0 2px 3px 2px; display: flex; flex-direction: column;`;
const ViewTools = styled.div`height: 31px; flex: none; display: flex; align-items: center; padding-right: 1px;`;
const ViewName = styled.span`margin: 0 12px 0 auto; font-weight: 600; letter-spacing: -0.25px; border-bottom: 1px solid ${c.text}; line-height: 17px;`;
const Viewport = styled.div`flex: 1; border: 2px solid #0000e8; background: #52576e; position: relative; outline: 1px solid #26294a; outline-offset: -3px;`;
const Placed = styled.svg`position: absolute; left: ${(p) => p.$x}px; top: ${(p) => p.$y}px;`;
const TwoD = styled.span`color: #111315; font-size: 12.5px;`;
const Right = styled(Dock)`width: 392px; margin-left: 3px; height: 957px;`;
const MapBody = styled.div`padding: 7px 7px 0 7px;`;
const Push = styled.span`flex: 1;`;
const StatusBar = styled.div`height: 34px; flex: none; display: flex; align-items: center; justify-content: flex-end; gap: 3px; padding: 0 1px 0;`;
const Progress = styled.div`width: 928px; height: 28px; border: 1px solid ${c.dim}; border-top: 1px solid #1d2023; border-radius: 2px;`;
const TaskBar = styled.footer`height: 36px; flex: none; display: flex; border-top: 1px solid #6e7276; padding-top: 1px;`;
const Task = styled.div`
  width: 190px; height: 32px; margin-right: 1px; display: flex; align-items: center; gap: 7px; padding: 0 6px 3px 6px; white-space: nowrap;
  border-top: 3px solid ${(p) => (p.$k === "active" ? "#3a8bbd" : p.$k === "lit" ? "#6b7074" : "#40464b")};
  background: ${(p) => (p.$k === "active" ? "#355f77" : p.$k === "lit" ? "#4b5156" : "#40464b")};
`;
const Sound = styled.span`margin-left: auto;`;
const Launch = styled.div`width: 73px; height: 30px; display: flex; align-items: center; gap: 15px; padding-left: 5px;`;
const Tray = styled.div`flex: 1; height: 31px; display: flex; align-items: center; justify-content: space-between; padding: 0 6px 0 17px;`;
const Lang = styled.span`color: #3f4796; font-size: 13.5px;`;
const Clock = styled.span`font-size: 24px; letter-spacing: -0.6px;`;

const cells = (list) => list.map((n) => <Cell key={n}><Icon n={n} /></Cell>);
const small = (list) => list.map((n) => <Cell key={n} $w={24}><Icon n={n} s={13} /></Cell>);

/* triangulated 100 x 100 grid */
const N = 100;
const DX = 6.285;
const DY = 6.265;
const W = N * DX;
const H = N * DY;
let gridPath = "";
let diagPath = "";
for (let i = 0; i <= N; i++) {
  const x = (i * DX + 0.5).toFixed(2);
  const y = (i * DY + 0.5).toFixed(2);
  gridPath += `M${x} .5V${H}M.5 ${y}H${W}`;
  diagPath += `M${x} .5L${W} ${(H - i * DY).toFixed(2)}`;
  if (i) diagPath += `M.5 ${y}L${(W - i * DX).toFixed(2)} ${H}`;
}
const Mesh = () => (
  <Placed $x={289} $y={131} width="630" height="628">
    <rect width={W + 1} height={H + 1} fill="#cccccb" />
    <path d={diagPath} stroke="#00006e" strokeWidth=".7" />
    <path d={gridPath} stroke="#000088" strokeWidth="1.500" />
    <rect x=".5" y=".5" width={W} height={H} fill="none" stroke="#000088" />
  </Placed>
);
const Triad = () => (
  <Placed $x={100} $y={710} width="90" height="80">
    <path d="M12 72V14" stroke="#d8d83a" strokeWidth="1.400" />
    <path d="M7 19l5-12 5 12z" fill="#e6e600" stroke="#77770a" strokeWidth=".6" />
    <path d="M12 68.500h52" stroke="#e01515" strokeWidth="1.400" />
    <path d="M61 64l13 4.500L61 73.500z" fill="#d90000" stroke="#5e0000" strokeWidth=".6" />
    <circle cx="12" cy="69" r="5.500" fill="#005c00" />
    <path d="M15 7l5 6 5-6M20 13v6M15.500 55.500h10l-9.500 13h10M64 56l11 13M75 56L64 69" fill="none" stroke="#fff" strokeWidth="1.400" />
  </Placed>
);
const Cursor = () => (
  <Placed $x={1073} $y={811} width="16" height="24">
    <path d="M2 2v17l4-3 3 6 3-1.500-3-6 5-.5z" fill="#31363b" stroke="#fcfcfc" strokeWidth="1.200" />
  </Placed>
);

const tasks = [
  ["folder", "L2-tracking — Dolphin"],
  ["bird", "Inbox - Mozilla Thunde..."],
  ["term", "L2-tracking : paraview ...", "lit"],
  ["fox", "NQBH (NQBH) — ..."],
  ["tex", "/home/nguyen/1_NQB...", "lit"],
  ["tex", "NQBH_software_report...", "lit"],
  ["sublime", "~/OpenFOAM/nguyen-..."],
  ["logo", "ParaView 5.6.0 64-bit", "active"],
];

const SectionRow = ({ title, mt }) => (
  <Row $g={6} $mt={mt}>
    <Section><Icon n="minus" s={13} />{title}</Section>
    <Button $w={29}><Icon n="copy" s={14} /></Button>
    <Button $w={29} $off><Icon n="paste" s={14} /></Button>
    <Button $w={29} />
  </Row>
);

export default function App() {
  return (
    <Window>
      <Global />
      <TitleBar>
        <Icon n="logo" s={17} />
        <span>ParaView 5.6.0 64-bit</span>
        <TitleEnd><Icon n="chevron" s={12} /><Icon n="diamond" s={14} /><Icon n="closeTitle" s={17} /></TitleEnd>
      </TitleBar>
      <MenuBar>
        {["File", "Edit", "View", "Sources", "Filters", "Tools", "Catalyst", "Macros", "Help"].map((m) => <span key={m}>{m}</span>)}
      </MenuBar>
      <ToolRow>
        <Grip />
        {cells(["open", "save"])}<Rule $r={3} />
        {cells(["connect", "disconnect", "clock"])}<Rule $r={3} />
        {cells(["undo", "redo"])}<Rule $l={3} $r={4} />
        {cells(["apply", "colorsel", "palette"])}<Grip $l={7} $r={4} />
        {cells(["first", "prev", "play", "next", "last", "loop"])}<Grip $l={6} $r={3} />
        <TimeLabel>Time:</TimeLabel>
        <Combo $w={49} $mr={4}>0<Icon n="chevron" s={12} /></Combo>
        <Field $w={50}>0<Steps><Icon n="chevron" s={12} /><Icon n="chevron" s={12} /></Steps></Field>
        <Cell $w={73}>(max is 11)</Cell>
        <Grip $l={3} $r={3} />
        {cells(["wrench", "addcam"])}
      </ToolRow>
      <ToolRow>
        <Grip />
        {cells(["graybar", "editmap", "sepmap", "range", "rangec", "ranget", "rangeeye"])}
        <Cell $w={1} />
        <Combo $w={148} $mr={6}><Swatch $c="#c7833f" />Solid Color<Icon n="chevron" s={12} /></Combo>
        <Combo $w={85} $mr={8} $off><Icon n="chevron" s={12} /></Combo>
        <Grip $r={4} />
        <Combo $w={148} $mr={8}>Surface With Edges<Icon n="chevron" s={12} /></Combo>
        <Grip />
        {cells(["reset", "zoomdata", "zoombox", "px", "mx", "py", "my", "pz", "mz", "rotp", "rotm"])}
        <Grip $l={7} $r={3} />
        <Cell><Pressed><Icon n="orient" /></Pressed></Cell>
        {cells(["cshow", "creset", "cpick"])}
        <Grip $l={7} />
      </ToolRow>
      <ToolRow $mb={3}>
        <Grip />
        {cells(["calc", "contour", "clip", "slice", "threshold", "subset", "glyph", "stream", "warp", "group", "extract"])}
        <Grip $l={7} />
        {cells(["pick", "tplot", "lplot", "splot", "hex"])}
        <Grip $l={7} />
        {cells(["ruler"])}
      </ToolRow>
      <Main>
        <Left>
          <Dock $h={298}>
            <Head>Pipeline Browser</Head>
            <Tree>
              <TreeRow><TreeEye /><TreeIcon $stem={4}><Icon n="host" s={14} /></TreeIcon><TreeName>builtin:</TreeName></TreeRow>
              <TreeRow><TreeEye><Icon n="eye" s={15} /></TreeEye><TreeIcon $stem={4}><Icon n="box" s={16} /></TreeIcon><TreeName $sel>u_*</TreeName></TreeRow>
            </Tree>
          </Dock>
          <DockTabs><Tab $on $w={80}>Properties</Tab><Tab $w={90}>Information</Tab></DockTabs>
          <Dock $h={628}>
            <Head h={28}>Properties</Head>
            <Props>
              <Row $g={4}>
                <Button $w={82} $h={32} $off><Icon n="applyg" s={15} />Apply</Button>
                <Button $w={82} $h={32} $off><Icon n="resetg" s={15} />Reset</Button>
                <Button $w={82} $h={32}><Icon n="delete" s={14} />Delete</Button>
                <Button $w={29}><Icon n="help" s={14} /></Button>
              </Row>
              <Row $g={4} $mt={8}>
                <Field $w={253} $hint>Search ... (use Esc to clear text)</Field>
                <Button $w={30}><Icon n="cog" s={15} /></Button>
              </Row>
              <Scroller>
                <Page>
                  <Wide>
                    <SectionRow title="Properties (u_*)" mt={1} />
                    <ArrayBox>
                      <ArrayRow $head><Check />Cell/Point Array Status</ArrayRow>
                      <ArrayRow><Check /><Icon n="state" s={17} /><span>State</span></ArrayRow>
                    </ArrayBox>
                    <SectionRow title="Display (UnstructuredGri" mt={8} />
                    <Prop $mt={8}><PropName $w={121}>Representation</PropName><Combo $w={170}>Surface With Edges</Combo></Prop>
                    <Heading $mt={9}>Coloring</Heading>
                    <Row $g={6}><Combo $w={148}><Swatch $c="#c7833f" />Solid Color<Icon n="chevron" s={12} /></Combo><Combo $w={148} $off /></Row>
                    <Row $g={6} $mt={6}>
                      <Button $w={82} $h={32}><Icon n="editmap" s={15} />Edit</Button>
                      {["sepmap", "rangeGray", "rangeGray", "rangeGray", "heart", "cog"].map((n, i) => <Button key={i} $w={29} $off><Icon n={n} s={16} /></Button>)}
                    </Row>
                    <Heading $mt={9}>Styling</Heading>
                    <Prop><PropName>Opacity</PropName><Slider $full /><Field $w={120}>1</Field></Prop>
                    <Heading $mt={9}>Lighting</Heading>
                    <Prop><PropName>Specular</PropName><Slider /><Field $w={120}>0</Field></Prop>
                    <Heading $mt={9}>Edge Styling</Heading>
                    <EdgeButton><Swatch $c="#00008b" $s={15} />Edge Color</EdgeButton>
                  </Wide>
                </Page>
                <Bar><Thumb $w={6} $h={278} /></Bar>
                <Bar $h><Thumb $w={206} $h={6} /></Bar>
                <Bar />
              </Scroller>
            </Props>
          </Dock>
        </Left>
        <Center>
          <TabStrip>
            <Tab $on $spread $w={121} $bg={c.panel}><Icon n="max" s={10} /><span>Layout #1</span><Icon n="cross" s={9} /></Tab>
            <Tab $w={80}>+</Tab>
          </TabStrip>
          <ViewFrame>
            <ViewTools>
              {small(["camundo", "camredo"])}<Rule $h={24} $r={3} />
              <Cell $w={24}><TwoD>2D</TwoD></Cell>
              {small(["campic"])}<Rule $h={24} $r={3} />
              {small(["seladd", "selsub", "seltog"])}<Rule $h={24} $r={3} />
              {small(["scell", "spoint", "sfrc", "sfrp", "spolyc", "spolyp", "sblock", "icell", "ipoint", "hpoint", "hcell", "trash"])}
              <ViewName>RenderView1</ViewName>
              <Row $g={3}>
                {["splith", "splitv", "max", "restore", "cross"].map((n) => <Button key={n} $w={26} $h={26}><Icon n={n} s={10} /></Button>)}
              </Row>
            </ViewTools>
            <Viewport><Mesh /><Triad /><Cursor /></Viewport>
          </ViewFrame>
        </Center>
        <Right>
          <Head h={28}>Color Map Editor</Head>
          <MapBody>
            <Row $g={4}>
              <Field $w={274} $hint>Search ... (use Esc to clear text)</Field>
              <Button $w={30}><Icon n="cog" s={15} /></Button>
              <Button $w={30} $off><Icon n="graybar" s={16} /></Button>
              <Button $w={30} $off><Icon n="savep" s={16} /></Button>
            </Row>
            <Row $mt={7}>Array Name: &lt;none&gt;</Row>
            <Row $g={4} $mt={13}>
              <Button $w={29} $off><Icon n="refresh" s={15} /></Button>
              <Button $w={29} $off><Icon n="loadr" s={16} /></Button>
              <Button $w={29} $off><Icon n="loadf" s={16} /></Button>
              <Push />
              <Button $w={117} $h={32} $off><Icon n="applyg" s={15} />Render Views</Button>
              <Button $w={29} $on><Icon n="applyc" s={15} /></Button>
            </Row>
          </MapBody>
        </Right>
      </Main>
      <StatusBar><Button $w={26} $h={26} $off><Icon n="clearx" s={9} /></Button><Progress /></StatusBar>
      <TaskBar>
        <Launch><Icon n="kde" s={25} /><Icon n="down" s={19} /></Launch>
        {tasks.map(([n, t, k]) => (
          <Task key={t} $k={k}><Icon n={n} s={20} /><span>{t}</span>{n === "fox" && <Sound><Icon n="speaker" s={17} /></Sound>}</Task>
        ))}
        <Tray>
          <Lang>EN</Lang>
          <Icon n="trayplay" s={17} /><Icon n="notes" s={20} /><Icon n="clipb" s={16} /><Icon n="speaker" s={16} />
          <Icon n="battery" s={20} /><Icon n="net" s={18} /><Icon n="tri" s={13} /><Clock>15:18</Clock><Icon n="desk" s={24} />
        </Tray>
      </TaskBar>
    </Window>
  );
}
